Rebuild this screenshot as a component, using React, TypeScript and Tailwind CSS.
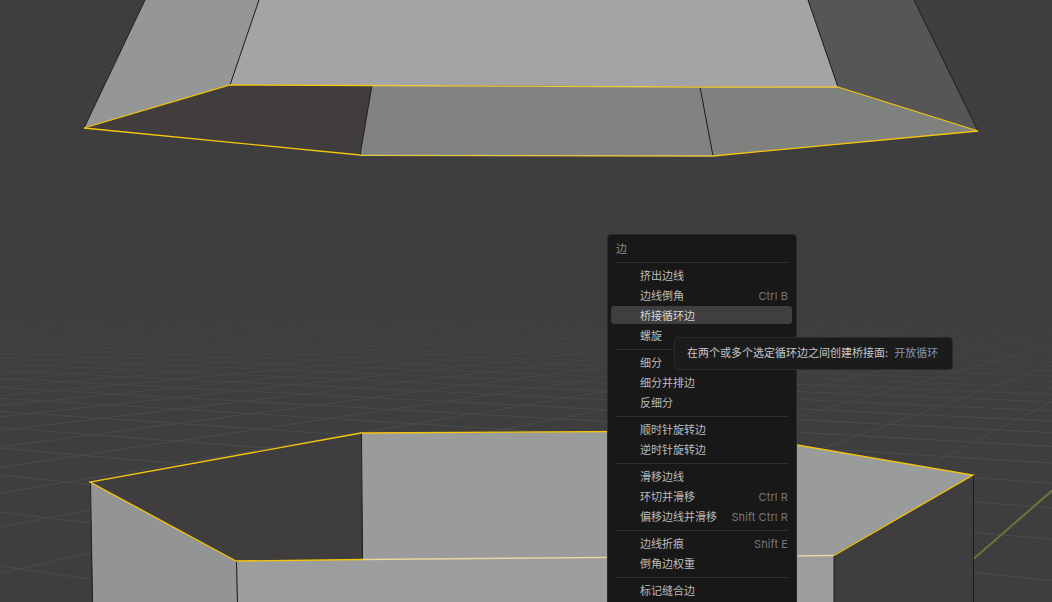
import React from "react";

type Row = { label: string; keys?: string; active?: boolean } | "sep";

const rows: Row[] = [
  { label: "挤出边线" },
  { label: "边线倒角", keys: "Ctrl B" },
  { label: "桥接循环边", active: true },
  { label: "螺旋" },
  "sep",
  { label: "细分" },
  { label: "细分并排边" },
  { label: "反细分" },
  "sep",
  { label: "顺时针旋转边" },
  { label: "逆时针旋转边" },
  "sep",
  { label: "滑移边线" },
  { label: "环切并滑移", keys: "Ctrl R" },
  { label: "偏移边线并滑移", keys: "Shift Ctrl R" },
  "sep",
  { label: "边线折痕", keys: "Shift E" },
  { label: "倒角边权重" },
  "sep",
  { label: "标记缝合边" },
];

const HORIZON = 275;
const BOTTOM = 602;

// floor grid: two fans of lines, evenly spaced where they cross the bottom of the view
const fan = (vx: number, start: number, step: number, count: number, reach: number) =>
  Array.from({ length: count }, (_, i) => {
    const x = start + step * i;
    return { x1: vx, x2: x, o: Math.min(1, reach / Math.abs(x - vx)) };
  });

const gridA = fan(1300, 924 - 262, -262, 46, 3000);
const gridB = fan(-2000, 247 - 510, 510, 36, 7000);

const Viewport = () => (
  <svg className="absolute inset-0" width="1052" height="602" viewBox="0 0 1052 602">
    <defs>
      <linearGradient id="floorFade" gradientUnits="userSpaceOnUse" x1="0" y1="285" x2="0" y2="420">
        <stop offset="0" stopColor="#000" />
        <stop offset="0.35" stopColor="#555" />
        <stop offset="1" stopColor="#fff" />
      </linearGradient>
      <mask id="floorMask" maskUnits="userSpaceOnUse" x="0" y="0" width="1052" height="602">
        <rect width="1052" height="602" fill="url(#floorFade)" />
      </mask>
    </defs>
    <g mask="url(#floorMask)">
      {[...gridA, ...gridB].map((l, i) => (
        <line
          key={i}
          x1={l.x1}
          y1={HORIZON}
          x2={l.x2}
          y2={BOTTOM}
          stroke="#4b4b4b"
          strokeOpacity={l.o}
          strokeWidth="1"
        />
      ))}
    </g>
    <line x1="924" y1="602" x2="1300" y2="275" stroke="#667b38" strokeWidth="2" />

    {/* upper mesh */}
    <polygon points="145,0 259,0 230,85 84,128" fill="#959797" />
    <polygon points="259,0 808,0 838,87 372,85 230,85" fill="#a3a4a5" />
    <polygon points="808,0 914,0 978,131 838,87" fill="#565658" />
    <polygon points="84,128 230,85 372,85 360,155" fill="#413d3c" />
    <polygon points="372,85 700,87 713,156 360,155" fill="#818382" />
    <polygon points="700,87 838,87 978,131 713,156" fill="#7f817f" />
    <g stroke="#1f1f1f" strokeWidth="1" fill="none">
      <line x1="145" y1="0" x2="84" y2="128" />
      <line x1="259" y1="0" x2="230" y2="85" />
      <line x1="808" y1="0" x2="838" y2="87" />
      <line x1="914" y1="0" x2="978" y2="131" />
      <line x1="372" y1="85" x2="360" y2="155" />
      <line x1="700" y1="87" x2="713" y2="156" />
    </g>
    <g stroke="#f5c60c" strokeWidth="1.3" fill="none">
      <polyline points="84,128 230,85 372,85.5" />
      <polyline points="84,128 360,155" />
      <polyline points="372,85.5 700,87 838,87" stroke="#ecca3c" />
      <polyline points="360,155.3 713,156" stroke="#e8c945" />
      <polyline points="838,87 978,131 713,156" />
    </g>

    {/* lower mesh */}
    <polygon points="90,482 361,433 363,560 236,561" fill="#3f3d3e" />
    <polygon points="361,433 715,431 973,475 834,555 363,560" fill="#9a9b9b" />
    <polygon points="236,561 834,555 834,602 237,602" fill="#9c9d9d" />
    <polygon points="90,482 236,561 237,602 93,602" fill="#939594" />
    <polygon points="834,555 973,475 973,602 834,602" fill="#3f3d3f" />
    <g stroke="#1c1c1c" strokeWidth="1" fill="none">
      <line x1="90.5" y1="482" x2="92.5" y2="602" />
      <line x1="236.5" y1="561" x2="237.5" y2="602" />
      <line x1="361.5" y1="433" x2="362.5" y2="560" />
      <line x1="834" y1="555" x2="834" y2="602" />
      <line x1="973.5" y1="475" x2="973.5" y2="602" />
    </g>
    <g stroke="#f5c60c" strokeWidth="1.3" fill="none">
      <polyline points="236,561 90,482 361,433 715,431" />
      <polyline points="715,431 973,475 834,555.5" />
      <polyline points="236,561 363,559.5" />
      <polyline points="363,559.5 834,555.5" stroke="#e8d8a0" />
    </g>
  </svg>
);

const Divider = () => (
  <div className="h-[7px] pt-[4px] px-[7px]">
    <div className="h-px bg-[#2e2e2e]" />
  </div>
);

const MenuRow = ({ label, keys, active }: { label: string; keys?: string; active?: boolean }) => (
  <div className="h-5 pl-[3px] pr-[4px] py-px">
    <div
      className={
        active
          ? "h-full flex items-center justify-between pt-[2px] pl-[29px] pr-[4px] rounded-[3px] bg-[#3f3f3f] text-[#d6d6d6]"
          : "h-full flex items-center justify-between pt-[2px] pl-[29px] pr-[4px] text-[#bcbcbc]"
      }
    >
      <span>{label}</span>
      {keys && <span className="tracking-[0.1px] text-[#777777]">{keys}</span>}
    </div>
  </div>
);

export default function App() {
  return (
    <div
      lang="zh-CN"
      className="relative w-full h-[602px] overflow-hidden bg-[#3e3e3e] text-[11px] leading-none [font-family:Inter,'Noto_Sans_CJK_SC',sans-serif]"
    >
      <Viewport />

      {/* context menu */}
      <div className="absolute left-[607px] top-[234px] w-[190px] h-[420px] rounded-[4px] border border-[#2a2a2a] bg-[#181818]">
        <div className="h-[27px] flex items-center pt-[2px] pl-[8px] text-[#8c8c8c]">边</div>
        <div className="h-px mx-[7px] mb-[2px] bg-[#2e2e2e]" />
        {rows.map((r, i) =>
          r === "sep" ? <Divider key={i} /> : <MenuRow key={i} {...r} />
        )}
      </div>

      {/* tooltip */}
      <div className="absolute left-[674px] top-[337px] w-[279px] h-[33px] flex items-center pl-[12px] rounded-[4px] border border-[#2a2a2a] bg-[#1b1b1b] text-[#c8c8c8]">
        <span>在两个或多个选定循环边之间创建桥接面:</span>
        <span className="ml-[6px] text-[#7f95b8]">开放循环</span>
      </div>
    </div>
  );
}
